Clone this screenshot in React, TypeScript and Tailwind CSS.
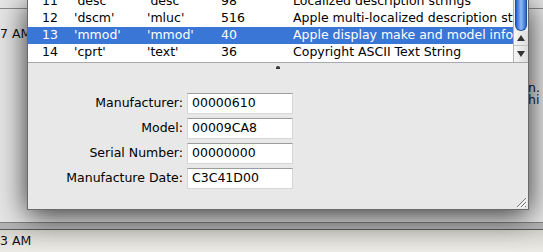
import React from 'react';

const rows = [
  { n: '11', sig: "'desc'", type: "'desc'", size: '98', desc: 'Localized description strings' },
  { n: '12', sig: "'dscm'", type: "'mluc'", size: '516', desc: 'Apple multi-localized description strings' },
  { n: '13', sig: "'mmod'", type: "'mmod'", size: '40', desc: 'Apple display make and model information', sel: true },
  { n: '14', sig: "'cprt'", type: "'text'", size: '36', desc: 'Copyright ASCII Text String' },
];

const fields = [
  { label: 'Manufacturer:', value: '00000610' },
  { label: 'Model:', value: '00009CA8' },
  { label: 'Serial Number:', value: '00000000' },
  { label: 'Manufacture Date:', value: 'C3C41D00' },
];

const font = { fontFamily: '"DejaVu Sans", "Liberation Sans", sans-serif' };

const Scroller: React.FC = () => (
  <div className="w-[15px] flex flex-col border-l border-[#b5b5b5] bg-[#eeeeee]">
    <div className="h-[31px] px-[1px]">
      <div className="h-full rounded-b-[7px] bg-gradient-to-r from-[#1f5fc8] via-[#8fbcf6] to-[#2a66cc] border border-[#1f4f9e] border-t-0" />
    </div>
    <div className="h-[15px] flex items-center justify-center border-b border-[#c4c4c4] bg-gradient-to-r from-[#f6f6f6] to-[#dcdcdc]">
      <svg width="8" height="6" viewBox="0 0 8 6"><path d="M4 0 L8 6 L0 6 Z" fill="#333" /></svg>
    </div>
    <div className="flex-1 flex items-center justify-center bg-gradient-to-r from-[#f6f6f6] to-[#dcdcdc]">
      <svg width="8" height="6" viewBox="0 0 8 6"><path d="M0 0 L8 0 L4 6 Z" fill="#333" /></svg>
    </div>
  </div>
);

const InfoWindow: React.FC = () => (
  <div
    className="absolute left-[27px] top-0 w-[502px] h-[210px] flex flex-col bg-[#e8e8e8] border-x border-b border-[#6a6a6a] shadow-[0_5px_28px_rgba(0,0,0,0.8)]"
    style={font}
  >
    <div className="h-[63px] flex border-b border-[#a9a9a9] bg-white">
      <div className="flex-1 overflow-hidden">
        <div className="-mt-[7px] text-[12.5px] text-black">
          {rows.map((r) => (
            <div
              key={r.n}
              className={`h-[17px] flex items-center whitespace-nowrap ${r.sel ? 'bg-[#3a76d6] text-white' : ''}`}
            >
              <span className="w-[46px] pl-[14px]">{r.n}</span>
              <span className="w-[73px]">{r.sig}</span>
              <span className="w-[74px]">{r.type}</span>
              <span className="w-[72px]">{r.size}</span>
              <span className="flex-1 overflow-hidden">{r.desc}</span>
            </div>
          ))}
        </div>
      </div>
      <Scroller />
    </div>
    <div className="h-[7px] flex justify-center items-center">
      <div className="w-[4px] h-[3px] rounded-t-full bg-[#333] mt-[1px]" />
    </div>
    <div className="flex-1 relative pt-[23px]">
      <div className="grid grid-cols-[155px_106px] gap-x-[4px] gap-y-[4px] text-[12.5px] text-black">
        {fields.map((f) => (
          <React.Fragment key={f.label}>
            <div className="h-[21px] flex items-center justify-end">{f.label}</div>
            <div className="h-[21px] flex items-center pl-[4px] bg-white border border-[#d6d6d6] border-t-[#9c9c9c]">
              {f.value}
            </div>
          </React.Fragment>
        ))}
      </div>
      <svg className="absolute right-[1px] bottom-[1px]" width="12" height="12" viewBox="0 0 12 12">
        <path d="M11 2 L2 11 M11 6 L6 11 M11 10 L10 11" stroke="#7a7a7a" strokeWidth="1" />
        <path d="M12 3 L3 12 M12 7 L7 12" stroke="#ffffff" strokeWidth="1" />
      </svg>
    </div>
  </div>
);

const App: React.FC = () => {
  return (
    <div className="relative w-[543px] h-[252px] overflow-hidden bg-[#e6e6e6]" style={font}>
      <div className="h-full flex flex-col">
        <div className="h-[222px] flex flex-col text-[12.5px] text-[#111]">
          <div className="h-[8px]" />
          <div className="h-[18px] border-t border-[#8a8a8a]" />
          <div className="h-[16px] flex items-center">
            <span className="w-[27px] text-right whitespace-nowrap">7 AM</span>
          </div>
          <div className="flex-1 flex justify-end">
            <div className="w-[15px] pt-[40px] leading-[12px] overflow-hidden whitespace-nowrap">
              <div>n. <span className="text-[#e0a020]">1</span></div>
              <div className="text-[#10284a]">hi</div>
            </div>
          </div>
        </div>
        <div className="h-[7px] border-t border-[#808080] bg-[#b4b4b4]" />
        <div className="flex-1 border-t border-[#5a5a5a] bg-gradient-to-b from-[#d4d4cc] to-[#ecebe6] text-[12.5px] text-[#111] flex items-center">
          <span className="w-[27px] text-right whitespace-nowrap">3 AM</span>
        </div>
      </div>
      <InfoWindow />
    </div>
  );
};

export default App;
